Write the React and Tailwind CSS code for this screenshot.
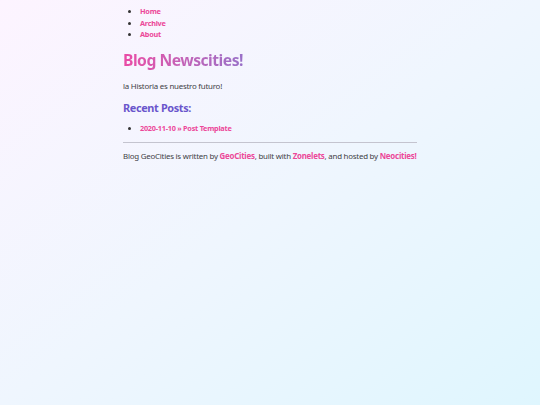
export default function App() {
  const font = { fontFamily: '"Noto Sans", "Open Sans", sans-serif' };
  return (
    <div
      className="min-h-[405px] w-full bg-gradient-to-br from-[#fdf4ff] via-[#eff6fe] to-[#dff6fe] text-[#3f3f46]"
      style={font}
    >
      <div className="mx-auto w-[294px] pt-[6px] text-[7.9px] tracking-[-0.23px]">
        <ul className="list-disc pl-[17px] text-[7.3px] tracking-[-0.25px] leading-[11.5px] font-bold marker:text-[#333]">
          <li><a className="text-[#ec4899]">Home</a></li>
          <li><a className="text-[#ec4899]">Archive</a></li>
          <li><a className="text-[#ec4899]">About</a></li>
        </ul>
        <h1 className="mt-[9px] text-[15.7px] tracking-[-0.5px] font-bold leading-[20px] bg-gradient-to-r from-[#ea4aa5] to-[#9970c8] bg-clip-text text-transparent inline-block">
          Blog Newscities!
        </h1>
        <p className="mt-[10px] leading-[12px]">la Historia es nuestro futuro!</p>
        <h2 className="mt-[9px] text-[10.9px] tracking-[-0.36px] font-bold text-[#6a55cc] leading-[14px]">Recent Posts:</h2>
        <ul className="mt-[8.5px] list-disc pl-[17px] text-[7.3px] tracking-[-0.25px] leading-[11px] font-bold marker:text-[#333]">
          <li><a className="text-[#ec4899]">2020-11-10 » Post Template</a></li>
        </ul>
        <hr className="mt-[7.5px] border-t border-[#c4c4cf]" />
        <p className="mt-[7px] leading-[12px]">
          Blog GeoCities is written by <a className="font-bold text-[#ec4899]">GeoCities</a>, built with{" "}
          <a className="font-bold text-[#ec4899]">Zonelets</a>, and hosted by{" "}
          <a className="font-bold text-[#ec4899]">Neocities!</a>
        </p>
      </div>
    </div>
  );
}
